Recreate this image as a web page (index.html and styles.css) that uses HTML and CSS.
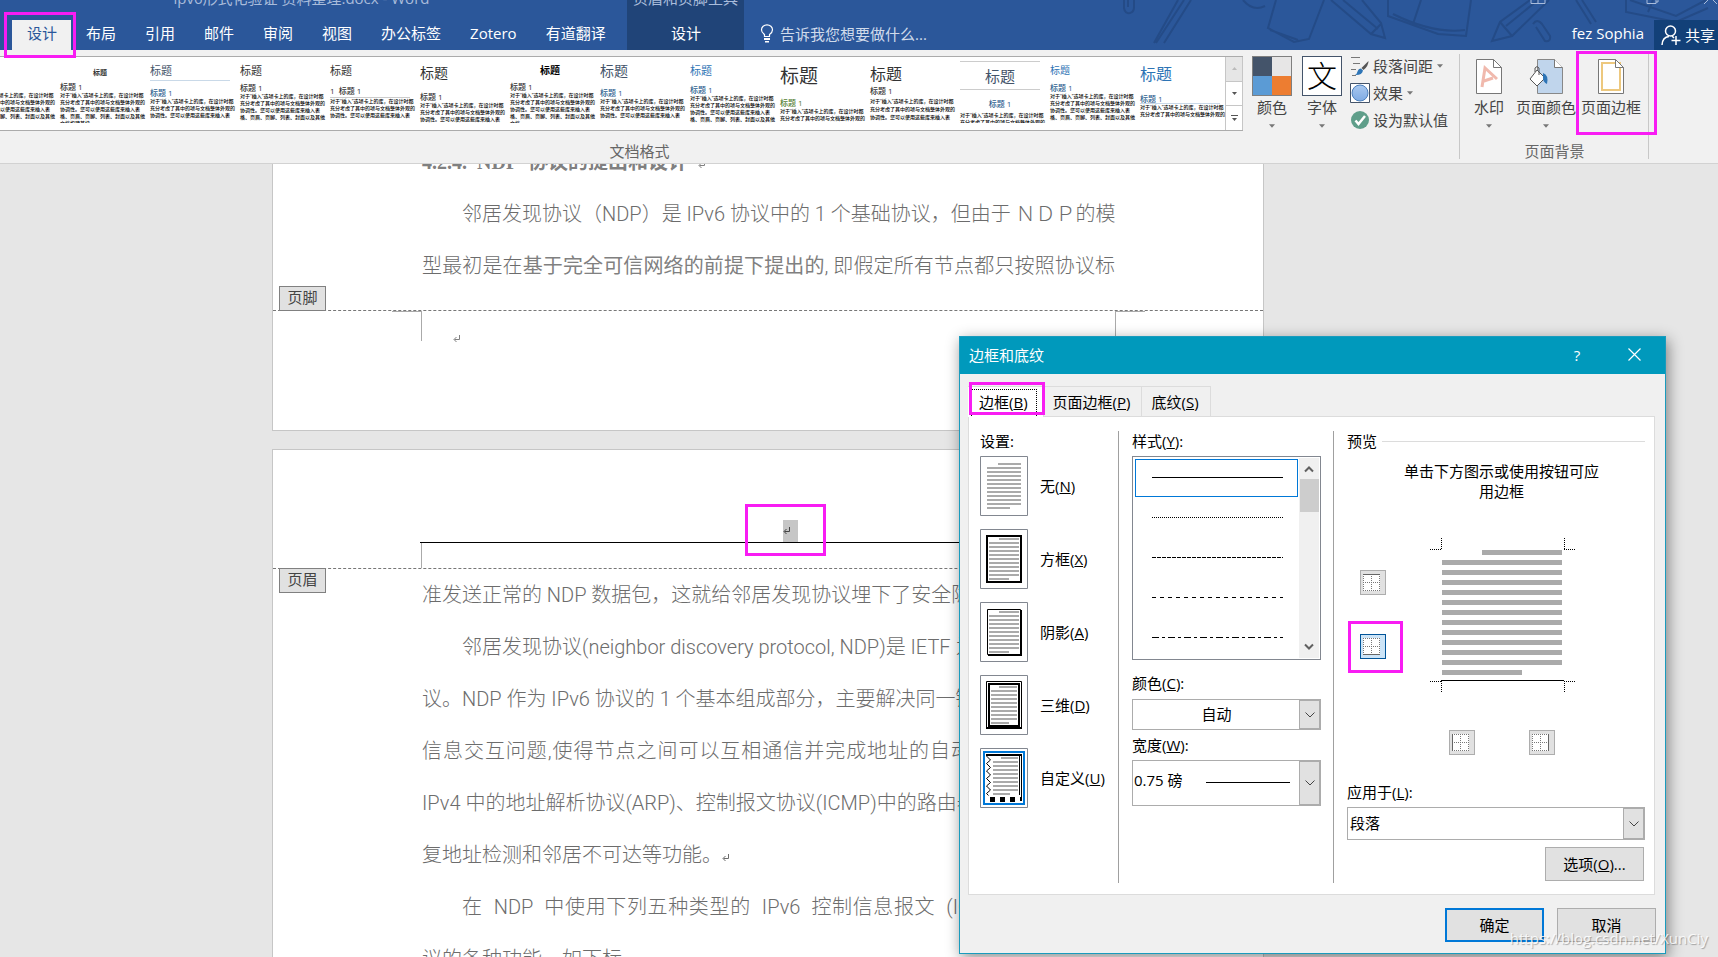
FILE: index.html
```html
<!DOCTYPE html>
<html lang="zh-CN">
<head>
<meta charset="utf-8">
<title>Word</title>
<link rel="stylesheet" href="styles.css">
</head>
<body>
<svg class="defs" width="0" height="0" aria-hidden="true">
  <defs>
    <symbol id="ret" viewBox="0 0 8 8"><path d="M6.5 0v4.5H1.5M3.5 2L1 4.5L3.5 7" fill="none" stroke="currentColor"/></symbol>
    <symbol id="caret" viewBox="0 0 7 4"><path d="M0 0h7L3.500 4z" fill="currentColor"/></symbol>
    <symbol id="chev" viewBox="0 0 10 6"><path d="M.5.5L5 5L9.500.5" fill="none" stroke="currentColor"/></symbol>
    <symbol id="lines" viewBox="0 0 34 46"><path d="M11 1h23M0 5h34M0 9h34M0 13h34M0 17h34M0 21h34M0 25h34M0 29h34M0 33h34M0 37h34M0 41h34M0 45h23" stroke="#aaa" stroke-width="2"/></symbol>
    <symbol id="grid" viewBox="0 0 17 17"><path d="M0 0h17v17H0z" fill="#fff"/><path d="M0 .5h17M0 8.500h17M0 16.500h17M.5 0v17M8.500 0v17M16.500 0v17" stroke="#777" stroke-dasharray="1 1"/></symbol>
  </defs>
</svg>

<div class="app">
  <header class="top">
    <svg class="doodle" viewBox="0 0 600 50" aria-hidden="true">
      <g fill="none" stroke="#244b87" stroke-width="2">
        <path d="M6 0v8q1 6 6 5q4-1 4-6V0M10 0v7"/>
        <path d="M66 0L38 43M73 0L46 43M60 0L36 43"/>
        <path d="M125 0q10 12 22 6M158 0l-8 28l26 14l15-3L206 0M152 30l28 10"/>
        <path d="M213 0l40 34l14 4l-4-15L244 0M225 0l35 29M253 34l10-10"/>
        <path d="M270 0l0 16l50 18l28 2l5-36M275 14q40 20 72 16M303 0l-8 24"/>
        <path d="M412 0l-30 22l-8 19l20-5L431 0M420 0l-32 26M382 22l12 14"/>
        <path d="M458 0l15 24M464 0l14 22M415 24q4-6 9 0l8 12q1 6-5 5l-9-14"/>
        <path d="M508 0v12l50 10l32-14M512 0l46 16l30-16M535 0l-5 12"/>
      </g>
    </svg>
    <div class="doc-title">ipv6形式化验证 资料整理.docx - Word</div>
    <div class="ctx-title">页眉和页脚工具</div>
    <svg class="winctl" viewBox="0 0 188 4" aria-hidden="true"><path d="M1 0v3.500h14V0M8 0v3.500M117 0v3.500h9V0M128 0v2h-2M174 4l4-4M183 0l4 4" fill="none" stroke="#a9bcdb"/></svg>
    <nav class="tabs">
      <button class="tab active">设计</button><button class="tab">布局</button><button class="tab">引用</button><button class="tab">邮件</button><button class="tab">审阅</button><button class="tab">视图</button><button class="tab">办公标签</button><button class="tab">Zotero</button><button class="tab">有道翻译</button>
    </nav>
    <button class="tab ctx">设计</button>
    <div class="tell">
      <svg width="14" height="19" viewBox="0 0 14 19"><path d="M4.500 12.500v-2Q1.500 8.500 1.500 5.800A5.500 5 0 0 1 12.500 5.800Q12.500 8.500 9.500 10.500v2z" fill="none" stroke="#fff" stroke-width="1.200"/><path d="M4 14h6v2H4zM5 17h4v1.500H5z" fill="#fff"/></svg>
      <span>告诉我您想要做什么...</span>
    </div>
    <div class="account">
      <span>fez Sophia</span>
      <button class="share"><svg width="20" height="20" viewBox="0 0 20 20"><g fill="none" stroke="#fff" stroke-width="1.500"><circle cx="9.500" cy="6" r="5"/><path d="M1 20Q1.500 12 8 11.500M11 11l2 2M15 11v9M10.500 15.500h9"/></g></svg>共享</button>
    </div>
  </header>

  <section class="ribbon">
    <div class="group formats">
      <div class="tools">
        <div class="gallery">
          <div class="thumbs">
            <div class="thumb s1"><b></b><i></i><p>对于“插入”选项卡上的库，在设计时都充分考虑了其中的项与文档整体外观的协调性。您可以使用这些库来插入表格、页眉、页脚、列表、封面以及其他</p></div>
            <div class="thumb s2"><b>标题</b><i>标题 1</i><p>对于“插入”选项卡上的库，在设计时都充分考虑了其中的项与文档整体外观的协调性。您可以使用这些库来插入表格、页眉、页脚、列表、封面以及其他文档构建基块。</p></div>
            <div class="thumb s3"><b>标题</b><i>标题 1</i><p>对于“插入”选项卡上的库，在设计时都充分考虑了其中的项与文档整体外观的协调性。您可以使用这些库来插入表</p></div>
            <div class="thumb s4"><b>标题</b><i>标题 1</i><p>对于“插入”选项卡上的库，在设计时都充分考虑了其中的项与文档整体外观的协调性。您可以使用这些库来插入表格、页眉、页脚、列表、封面以及其他</p></div>
            <div class="thumb s5"><b>标题</b><i>1&nbsp; 标题 1</i><p>对于“插入”选项卡上的库，在设计时都充分考虑了其中的项与文档整体外观的协调性。您可以使用这些库来插入表</p></div>
            <div class="thumb s6"><b>标题</b><i>标题 1</i><p>对于“插入”选项卡上的库，在设计时都充分考虑了其中的项与文档整体外观的协调性。您可以使用这些库来插入表</p></div>
            <div class="thumb s7"><b>标题</b><i>标题 1</i><p>对于“插入”选项卡上的库，在设计时都充分考虑了其中的项与文档整体外观的协调性。您可以使用这些库来插入表格、页眉、页脚、列表、封面以及其他文档</p></div>
            <div class="thumb s8"><b>标题</b><i>标题 1</i><p>对于“插入”选项卡上的库，在设计时都充分考虑了其中的项与文档整体外观的协调性。您可以使用这些库来插入表</p></div>
            <div class="thumb s9"><b>标题</b><i>标题 1</i><p>对于“插入”选项卡上的库，在设计时都充分考虑了其中的项与文档整体外观的协调性。您可以使用这些库来插入表格、页眉、页脚、列表、封面以及其他</p></div>
            <div class="thumb s10"><b>标题</b><i>标题 1</i><p>对于“插入”选项卡上的库，在设计时都充分考虑了其中的项与文档整体外观的</p></div>
            <div class="thumb s11"><b>标题</b><i>标题 1</i><p>对于“插入”选项卡上的库，在设计时都充分考虑了其中的项与文档整体外观的协调性。您可以使用这些库来插入表</p></div>
            <div class="thumb s12"><b>标题</b><i>标题 1</i><p>对于“插入”选项卡上的库，在设计时都充分考虑了其中的项与文档整体外观的</p></div>
            <div class="thumb s13"><b>标题</b><i>标题 1</i><p>对于“插入”选项卡上的库，在设计时都充分考虑了其中的项与文档整体外观的协调性。您可以使用这些库来插入表格、页眉、页脚、列表、封面以及其他</p></div>
            <div class="thumb s14"><b>标题</b><i>标题 1</i><p>对于“插入”选项卡上的库，在设计时都充分考虑了其中的项与文档整体外观的</p></div>
          </div>
          <div class="gscroll">
            <button class="off" aria-label="上一行"><svg width="5" height="3" viewBox="0 0 7 4"><path d="M0 4h7L3.500 0z" fill="#bbb"/></svg></button>
            <button aria-label="下一行"><svg width="5" height="3"><use href="#caret"/></svg></button>
            <button aria-label="更多"><svg width="7" height="7" viewBox="0 0 7 7"><path d="M0 .5h7" stroke="#555"/><path d="M1 3h5L3.500 6z" fill="#555"/></svg></button>
          </div>
        </div>
        <button class="big"><svg width="40" height="40" viewBox="0 0 40 40"><path d="M0 0h40v40H0z" fill="#7f7f7f"/><path d="M1 1h19v19H1z" fill="#44546a"/><path d="M20 1h19v19H20z" fill="#e7e6e6"/><path d="M1 20h19v19H1z" fill="#5b9bd5"/><path d="M20 20h19v19H20z" fill="#ed7d31"/></svg><span>颜色</span><svg class="car" width="6" height="4"><use href="#caret"/></svg></button>
        <button class="big"><span class="fontbox">文</span><span>字体</span><svg class="car" width="6" height="4"><use href="#caret"/></svg></button>
        <div class="stack">
          <button><svg width="20" height="20" viewBox="0 0 20 20"><path d="M1 1.500h9M3 7.500h7M1 13.500h5M2 19.500h4" stroke="#777"/><path d="M18.500 5l-7 7l2 2q5-4 5-9z" fill="#555"/><path d="M11 12.500l2 2q-1 5-8 4.500q2-1 2.500-3.500q1-3 3.500-3z" fill="#2e75b6"/></svg><span>段落间距</span><svg width="6" height="4"><use href="#caret"/></svg></button>
          <button><svg width="20" height="20" viewBox="0 0 20 20"><defs><linearGradient id="eg" x2="0" y2="1"><stop stop-color="#a9c8ef"/><stop offset="1" stop-color="#7fabe4"/></linearGradient></defs><path d="M.5.5h19v19H.5z" fill="#fff" stroke="#44546a"/><circle cx="10" cy="10" r="8" fill="url(#eg)" stroke="#4a7ebb"/></svg><span>效果</span><svg width="6" height="4"><use href="#caret"/></svg></button>
          <button><svg width="20" height="20" viewBox="0 0 20 20"><circle cx="10" cy="10" r="9" fill="#5f9e8a"/><path d="M5.500 10.500l3 3.500L15 6" fill="none" stroke="#fff" stroke-width="2.500"/></svg><span>设为默认值</span></button>
        </div>
      </div>
      <div class="glabel shift">文档格式</div>
    </div>
    <div class="group background">
      <div class="tools">
        <button class="big page"><svg width="26" height="35" viewBox="0 0 26 35"><path d="M.5.5h17l8 8v26H.5z" fill="#fff" stroke="#777"/><path d="M17.500.5v8h8" fill="none" stroke="#777"/><path d="M6 28L9 9l12 11M8 22l9-3" fill="none" stroke="#f0b9ad" stroke-width="3"/></svg><span>水印</span><svg class="car" width="6" height="4"><use href="#caret"/></svg></button>
        <button class="big page"><svg width="34" height="35" viewBox="0 0 34 35"><path d="M8.500.5h17l8 8v26h-25z" fill="#c0d5ec" stroke="#888"/><path d="M25.500.5v8h8" fill="#fff" stroke="#777"/><path d="M8 11l8 8l-8 8l-7-7z" fill="#fff" stroke="#555"/><path d="M6 13V9q2-3 4 0v7" fill="none" stroke="#555"/><path d="M14 14q6 2 4 11q-4-2-4-6z" fill="#2e75b6"/></svg><span>页面颜色</span><svg class="car" width="6" height="4"><use href="#caret"/></svg></button>
        <button class="big page"><svg width="26" height="35" viewBox="0 0 26 35"><path d="M.5.5h17l8 8v26H.5z" fill="#fff" stroke="#777"/><path d="M4 4h18v27H4z" fill="none" stroke="#edc87e" stroke-width="2"/><path d="M17.500.5v8h8z" fill="#fff" stroke="#777"/></svg><span>页面边框</span></button>
      </div>
      <div class="glabel">页面背景</div>
    </div>
  </section>

  <main class="canvas">
    <article class="sheet first">
      <div class="text">
        <h2>4.2.4.&nbsp; NDP&nbsp; 协议的提出和设计&nbsp; <svg width="8" height="8"><use href="#ret"/></svg></h2>
        <p class="in">邻居发现协议（NDP）是 IPv6 协议中的 1 个基础协议，但由于 ＮＤＰ的模</p>
        <p>型最初是在<strong>基于完全可信网络的前提下提出的</strong>, 即假定所有节点都只按照协议标</p>
      </div>
      <div class="footer">
        <span class="mark foot">页脚</span>
        <i class="corner"></i><i class="corner right"></i>
        <svg width="8" height="8"><use href="#ret"/></svg>
      </div>
    </article>
    <article class="sheet second">
      <div class="header">
        <div class="hline"><span class="sel"><svg width="8" height="8"><use href="#ret"/></svg></span></div>
        <div class="under"></div>
        <span class="mark head">页眉</span>
      </div>
      <div class="text part">
        <p>准发送正常的 NDP 数据包，这就给邻居发现协议埋下了安全隐</p>
        <p class="in">邻居发现协议(neighbor discovery protocol, NDP)是 IETF 为</p>
        <p>议。NDP 作为 IPv6 协议的 1 个基本组成部分，主要解决同一链</p>
        <p>信息交互问题,使得节点之间可以互相通信并完成地址的自动</p>
        <p>IPv4 中的地址解析协议(ARP)、控制报文协议(ICMP)中的路由器</p>
        <p class="end">复地址检测和邻居不可达等功能。<svg width="8" height="8"><use href="#ret"/></svg></p>
        <p class="in">在&nbsp; NDP&nbsp; 中使用下列五种类型的&nbsp; IPv6&nbsp; 控制信息报文&nbsp; (IC</p>
        <p class="end">议的各种功能，如下标</p>
      </div>
    </article>
  </main>

  <section class="dialog" role="dialog" aria-labelledby="dt">
    <div class="dbar"><span id="dt">边框和底纹</span>
      <button aria-label="帮助">?</button>
      <button aria-label="关闭"><svg width="13" height="13" viewBox="0 0 13 13"><path d="M.5.5l12 12M12.500.5l-12 12" stroke="#fff" stroke-width="1.200"/></svg></button>
    </div>
    <div class="dtabs">
      <button class="on"><span>边框(<u>B</u>)</span></button><button>页面边框(<u>P</u>)</button><button>底纹(<u>S</u>)</button>
    </div>
    <div class="panel">
      <div class="col settings">
        <div class="cap">设置:</div>
        <button><svg width="48" height="60" viewBox="0 0 48 60"><path d="M.5.5h47v59H.5z" fill="#fff" stroke="#828790"/><use href="#lines" x="7" y="7" width="34" height="46"/></svg><span>无(<u>N</u>)</span></button>
        <button><svg width="48" height="60" viewBox="0 0 48 60"><path d="M.5.5h47v59H.5z" fill="#fff" stroke="#828790"/><path d="M7 7h34v46H7z" fill="none" stroke="#000" stroke-width="2"/><path d="M19 10h20M9 14h30M9 18h30M9 22h30M9 26h30M9 30h30M9 34h30M9 38h30M9 42h30M9 46h30M9 50h20" stroke="#aaa" stroke-width="2"/></svg><span>方框(<u>X</u>)</span></button>
        <button><svg width="48" height="60" viewBox="0 0 48 60"><path d="M.5.5h47v59H.5z" fill="#fff" stroke="#828790"/><path d="M7.500 7.500h33v45h-33z" fill="none" stroke="#000"/><path d="M41 8v45H8" fill="none" stroke="#000" stroke-width="2"/><path d="M19 10h20M9 14h30M9 18h30M9 22h30M9 26h30M9 30h30M9 34h30M9 38h30M9 42h30M9 46h30M9 50h20" stroke="#aaa" stroke-width="2"/></svg><span>阴影(<u>A</u>)</span></button>
        <button><svg width="48" height="60" viewBox="0 0 48 60"><path d="M.5.5h47v59H.5z" fill="#fff" stroke="#828790"/><path d="M6.500 6.500h35v47h-35z" fill="none" stroke="#000"/><path d="M9 9h30v42H9z" fill="none" stroke="#000" stroke-width="2"/><path d="M6 53h36" stroke="#000" stroke-width="2"/><path d="M19 12h18M11 16h26M11 20h26M11 24h26M11 28h26M11 32h26M11 36h26M11 40h26M11 44h26M11 48h18" stroke="#aaa" stroke-width="2"/></svg><span>三维(<u>D</u>)</span></button>
        <button><svg width="48" height="60" viewBox="0 0 48 60"><path d="M.5.5h47v59H.5z" fill="#fff" stroke="#828790"/><path d="M4 4h40v52H4z" fill="none" stroke="#0078d7" stroke-width="2"/><path d="M6 7h36" stroke="#000" stroke-width="2"/><path d="M6.500 8l4 4l-4 3.500l4 4l-4 3.500l4 4l-4 3.500l4 4l-4 3.500l4 4l-4 3.500l2 2M39.500 8v39M41.500 8v45" fill="none" stroke="#000"/><path d="M10 49h5v5h-5zM20 49h5v5h-5zM30 49h5v5h-5zM40 49h2v4h-2z"/><path d="M21 10h17M13 14h25M13 18h25M13 22h25M13 26h25M13 30h25M13 34h25M13 38h25M13 42h25M13 46h17" stroke="#aaa" stroke-width="2"/></svg><span>自定义(<u>U</u>)</span></button>
      </div>
      <div class="col style">
        <div class="cap">样式(<u>Y</u>):</div>
        <div class="list">
          <ul role="listbox" aria-label="样式">
            <li role="option" aria-selected="true"><svg height="1"><path d="M0 .5h132" stroke="#000"/></svg></li>
            <li role="option"><svg height="1"><path d="M0 .5h132" stroke="#000" stroke-dasharray="1 1"/></svg></li>
            <li role="option"><svg height="1"><path d="M0 .5h132" stroke="#000" stroke-dasharray="4 1"/></svg></li>
            <li role="option"><svg height="1"><path d="M0 .5h132" stroke="#000" stroke-dasharray="4 4"/></svg></li>
            <li role="option"><svg height="1"><path d="M0 .5h132" stroke="#000" stroke-dasharray="7 3 3 3"/></svg></li>
          </ul>
          <div class="bar">
            <svg width="10" height="8" viewBox="0 0 10 8"><path d="M1 6.500L5 2.500L9 6.500" fill="none" stroke="#606060" stroke-width="2"/></svg>
            <i></i>
            <svg width="10" height="8" viewBox="0 0 10 8"><path d="M1 1.500L5 5.500L9 1.500" fill="none" stroke="#606060" stroke-width="2"/></svg>
          </div>
        </div>
        <label class="cap color" for="color">颜色(<u>C</u>):</label>
        <div class="combo"><select id="color" class="mid"><option>自动</option></select><span><svg width="10" height="6"><use href="#chev"/></svg></span></div>
        <label class="cap" for="width">宽度(<u>W</u>):</label>
        <div class="combo tall"><select id="width"><option>0.75 磅</option></select><em></em><span><svg width="10" height="6"><use href="#chev"/></svg></span></div>
      </div>
      <div class="col preview">
        <div class="cap legend">预览</div>
        <p class="hint">单击下方图示或使用按钮可应<br>用边框</p>
        <div class="diagram">
          <div class="side">
            <button aria-label="上框线"><svg width="17" height="17" viewBox="0 0 17 17"><use href="#grid"/><path d="M0 .5h17" stroke="#666"/></svg></button>
            <button class="picked" aria-label="下框线"><svg width="17" height="17" viewBox="0 0 17 17"><use href="#grid"/><path d="M0 16.500h17" stroke="#666"/></svg></button>
          </div>
          <svg width="146" height="156" viewBox="0 0 146 156"><path d="M0 11.500h12M11.500 0v12M134.500 0v12M134 11.500h12M0 143.500h12M11.500 143v12M134.500 143v12M134 143.500h12" fill="none" stroke="#000" stroke-dasharray="1 1"/><path d="M52 14.500h80M12 24.500h120M12 34.500h120M12 44.500h120M12 54.500h120M12 64.500h120M12 74.500h120M12 84.500h120M12 94.500h120M12 104.500h120M12 114.500h120M12 124.500h120M12 134.500h80" stroke="#aaa" stroke-width="5"/><path d="M11 142.500h123" stroke="#000"/></svg>
        </div>
        <div class="bottom">
          <button aria-label="左框线"><svg width="17" height="17" viewBox="0 0 17 17"><use href="#grid"/><path d="M.5 0v17" stroke="#666"/></svg></button>
          <button aria-label="右框线"><svg width="17" height="17" viewBox="0 0 17 17"><use href="#grid"/><path d="M16.500 0v17" stroke="#666"/></svg></button>
        </div>
        <label class="cap" for="apply">应用于(<u>L</u>):</label>
        <div class="combo apply"><select id="apply"><option>段落</option></select><span><svg width="10" height="6"><use href="#chev"/></svg></span></div>
        <button class="btn opts">选项(<u>O</u>)...</button>
      </div>
    </div>
    <div class="actions"><button class="btn ok">确定</button><button class="btn">取消</button></div>
    <i class="ring r-tab"></i><i class="ring r-side"></i>
  </section>

  <i class="ring r-design"></i><i class="ring r-border"></i><i class="ring r-head"></i>
  <div class="credit">https://blog.csdn.net/XunCiy</div>
</div>
</body>
</html>
```
FILE: styles.css
```css
* { box-sizing: border-box; }
body {
  margin: 0;
  font: 15px/20px "Open Sans", "Noto Sans CJK SC", sans-serif;
  color: #000;
}
button, select {
  font: inherit;
  color: inherit;
  margin: 0;
  padding: 0;
  border: 0;
  background: none;
  border-radius: 0;
}
svg { display: block; flex: none; }
.defs { position: absolute; }
.app {
  position: relative;
  height: 100vh;
  display: flex;
  flex-direction: column;
  overflow: hidden;
}

/* title bar and tabs */
.top {
  position: relative;
  display: grid;
  grid-template: 12px 38px / 627px 117px 1fr auto;
  background: #2b579a;
  color: #fff;
  flex: none;
}
.top > * { position: relative; }
.top .doodle { position: absolute; right: 0; top: 0; width: 600px; height: 50px; }
.doc-title, .ctx-title {
  display: flex;
  align-items: flex-end;
  justify-content: center;
  height: 12px;
  padding-bottom: 4px;
  overflow: hidden;
  white-space: nowrap;
  color: #a9bcdb;
}
.doc-title { padding-right: 24px; }
.ctx-title { background: #204478; }
.winctl { grid-column: 3 / 5; width: 188px; height: 4px; justify-self: end; }
.tabs { grid-column: 1; display: flex; padding: 8px 0 0 12px; }
.tab { padding: 0 14px 5px 15px; white-space: nowrap; }
.tab.active { background: #f1f1f1; color: #2b579a; }
.tab.ctx { background: #204478; padding-top: 8px; }
.tell { display: flex; align-items: center; gap: 6px; padding: 8px 0 3px 16px; color: #d0dbeb; }
.account { display: flex; align-items: flex-end; gap: 10px; }
.account > span { padding-bottom: 7px; }
.share {
  display: flex;
  align-items: center;
  gap: 4px;
  height: 30px;
  padding: 0 3px 0 7px;
  background: #124078;
}

/* ribbon */
.ribbon {
  display: flex;
  flex: none;
  height: 114px;
  padding-right: 69px;
  background: #f1f1f1;
  border-bottom: 1px solid #d2d2d2;
  color: #444;
}
.group {
  position: relative;
  display: flex;
  flex-direction: column;
  justify-content: space-between;
}
.group::after {
  content: "";
  position: absolute;
  right: 0;
  top: 4px;
  bottom: 4px;
  width: 1px;
  background: #c8c8c8;
}
.formats { flex: 1; min-width: 0; }
.tools { display: flex; height: 85px; padding-top: 6px; }
.glabel { text-align: center; color: #666; line-height: 20px; padding-bottom: 2px; }
.glabel.shift { padding-right: 181px; }
.gallery {
  display: flex;
  flex: 1;
  min-width: 0;
  height: 75px;
  background: #fff;
  border-top: 1px solid #ababab;
  border-bottom: 1px solid #ababab;
  margin-right: 4px;
}
.thumbs {
  display: flex;
  flex: 1;
  gap: 10px;
  height: 66px;
  min-width: 0;
  padding-top: 4px;
  overflow: hidden;
}
.thumb { flex: none; width: 80px; display: grid; grid-template-rows: 27px 10px auto; align-content: start; color: #333; }
.thumb:first-child { margin-left: -30px; }
.thumb b { font-weight: 400; font-size: 11px; line-height: 20px; height: 20px; }
.thumb i { font-style: normal; font-size: 8px; line-height: 10px; font-weight: 500; }
.thumb p { margin: 0 -6px 0 0; font-size: 5px; line-height: 7px; color: #000; font-weight: 500; }
.s1 { grid-template-rows: 21px 10px auto; }
.s2 { grid-template-rows: 21px 10px auto; }
.s2 b { font-weight: 700; font-size: 7px; line-height: 24px; text-align: center; }
.s3 b { color: #44546a; border-bottom: 1px solid #c9d9e8; }
.s3 i, .s8 i, .s9 i, .s13 i, .s14 i { color: #2e5f8f; }
.s4 { grid-template-rows: 22px 10px auto; }
.s5 { grid-template-rows: 25px 12px auto; }
.s5 i { border-bottom: 1px solid #ccc; height: 12px; }
.s6 { grid-template-rows: 31px 10px auto; }
.s6 b { font-size: 14px; line-height: 24px; }
.s7 { grid-template-rows: 21px 10px auto; }
.s7 b { font-weight: 700; font-size: 10px; line-height: 18px; text-align: center; color: #000; }
.s8 b { font-size: 14px; color: #44546a; }
.s9 { grid-template-rows: 24px 10px auto; }
.s9 b, .s13 b, .s14 b { color: #2e74b5; }
.s10 { grid-template-rows: 37px 10px auto; }
.s10 b { font-size: 19px; line-height: 30px; }
.s10 i { color: #538135; }
.s11 { grid-template-rows: 25px 10px auto; }
.s11 b { font-size: 16px; line-height: 26px; }
.s11 p { line-height: 8px; padding-top: 1px; }
.s12 { grid-template-rows: 38px 10px auto; }
.s12 b { font-size: 15px; line-height: 28px; height: 29px; text-align: center; color: #44546a; border-top: 1px solid #ccc; border-bottom: 1px solid #ccc; }
.s12 i { text-align: center; color: #2e5f8f; }
.s12 p { padding-top: 3px; }
.s13 { grid-template-rows: 22px 10px auto; }
.s13 b { font-size: 10px; line-height: 18px; }
.s14 { grid-template-rows: 33px 10px auto; }
.s14 b { font-size: 16px; line-height: 26px; }
.s14 i { border-bottom: 1px solid #c9d9e8; }
.gscroll { width: 18px; display: flex; flex-direction: column; border: solid #c6c6c6; border-width: 0 1px; }
.gscroll button { flex: 1; display: grid; place-items: center; color: #555; }
.gscroll button + button { border-top: 1px solid #c6c6c6; }
.gscroll .off { background: #e6e6e6; }
.big { display: flex; flex-direction: column; align-items: center; width: 50px; }
.big > span:not(.fontbox) { padding-top: 1px; white-space: nowrap; }
.car { color: #777; margin-top: 7px; }
.fontbox {
  display: grid;
  place-items: center;
  width: 40px;
  height: 40px;
  border: 1px solid #44546a;
  background: #fff;
  color: #000;
  font-size: 30px;
  font-weight: 300;
}
.stack { display: flex; flex-direction: column; gap: 7px; width: 113px; padding-left: 3px; }
.stack button { display: flex; align-items: center; gap: 3px; color: #444; white-space: nowrap; }
.stack button > svg + span + svg { color: #777; margin-left: 1px; }
.background { width: 189px; }
.background .tools { padding: 9px 0 0 14px; gap: 5px; }
.page { width: auto; }
.page:first-child { margin-right: 7px; }
.page > span:not(.fontbox) { padding-top: 3px; }

/* document */
.canvas { flex: 1; min-height: 0; overflow: hidden; background: #e6e6e6; padding-left: 272px; }
.sheet {
  width: 992px;
  background: #fff;
  border: 1px solid #c6c6c6;
  color: #808080;
  overflow: hidden;
}
.sheet.first { border-top: 0; }
.sheet.second { margin-top: 18px; }
.text { width: 693px; margin-left: 149px; font: 300 20px/52px Roboto, "Noto Sans CJK SC", sans-serif; color: #6c6c6c; }
.text.part { width: 549px; }
.text p, .text h2 { margin: 0; white-space: nowrap; text-align: justify; text-align-last: justify; }
.text .in { padding-left: 40px; }
.text .end, .text h2 { text-align-last: left; }
.text strong, .text h2 { color: #808080; }
.text h2 { margin-top: -28px; font: 700 20px/52px "Liberation Serif", "Noto Sans CJK SC", serif; }
.text svg { display: inline-block; }
.footer { position: relative; height: 120px; margin-top: 18px; border-top: 1px dashed #777; padding: 24px 0 0 180px; }
.header { position: relative; height: 119px; border-bottom: 1px dashed #777; padding: 70px 148px 0 147px; }
.hline { display: flex; justify-content: center; height: 23px; border-bottom: 1px solid #000; padding-left: 46px; }
.sel { display: flex; align-items: center; width: 15px; height: 22px; background: #c6c6c6; color: #444; }
.under { height: 25px; margin-left: 1px; border-left: 1px solid #aaa; }
.corner { position: absolute; top: 0; left: 119px; width: 30px; height: 30px; border: solid #aaa; border-width: 1px 1px 0 0; }
.corner.right { left: 842px; border-width: 1px 0 0 1px; }
.mark {
  position: absolute;
  left: 6px;
  width: 47px;
  height: 25px;
  border: 1px solid #808080;
  background: #e1e1e1;
  color: #444;
  text-align: center;
  line-height: 21px;
}
.mark.foot { top: -25px; }
.mark.head { top: 118px; }

/* dialog */
.dialog {
  position: absolute;
  top: 336px;
  right: 52px;
  width: 707px;
  border: 1px solid #1a9bbd;
  background: #f0f0f0;
  box-shadow: 2px 4px 14px rgba(0, 0, 0, .45);
  z-index: 2;
}
.dbar { display: flex; align-items: center; height: 37px; padding: 0 8px 2px 9px; background: #0099bc; color: #fff; }
.dbar span { flex: 1; }
.dbar button { width: 46px; height: 35px; display: grid; place-items: center; margin-left: 11px; }
.dtabs { display: flex; height: 42px; padding: 12px 0 0 8px; }
.dtabs button { border: 1px solid #dcdcdc; border-left: 0; border-bottom: 0; padding: 0 10px; height: 30px; }
.dtabs .on { background: #fff; padding: 0 6px 0 3px; height: 31px; position: relative; }
.dtabs .on span { display: block; padding: 2px 8px 4px 7px; border: 1px dotted #000; border-bottom: 0; }
.dtabs button + button { padding: 0 11px 0 9px; }
.panel {
  display: grid;
  grid-template-columns: 149px 215px 1fr;
  margin: 0 10px 0 8px;
  height: 479px;
  padding: 14px 0 11px;
  background: #fff;
  border: 1px solid #dcdcdc;
}
.col { display: flex; flex-direction: column; padding: 0 12px 0 11px; }
.col + .col { border-left: 1px solid #a0a0a0; padding-left: 13px; }
.cap { display: block; line-height: 20px; }
.settings .cap { margin-bottom: 5px; }
.settings button { display: flex; align-items: center; gap: 12px; height: 60px; margin-bottom: 13px; white-space: nowrap; }
.settings, .style { height: 452px; }
.list { display: flex; height: 204px; margin-top: 5px; border: 1px solid #828790; padding: 1px; }
.list ul { flex: 1; margin: 1px 1px 0; padding: 0; list-style: none; }
.list li { height: 38px; margin-bottom: 2px; padding: 18px 15px 0 17px; }
.list li[aria-selected] { border: 1px solid #0078d7; padding: 17px 14px 0 16px; }
.list li svg { width: 100%; }
.bar { width: 20px; display: flex; flex-direction: column; align-items: center; background: #f0f0f0; padding: 7px 0; }
.bar i { width: 19px; height: 33px; margin-top: 6px; margin-bottom: auto; background: #cdcdcd; }
.color { margin-top: 13px; }
.combo { position: relative; display: flex; height: 31px; margin: 6px 0 5px; border: 1px solid #acacac; background: #fff; }
.combo select { flex: 1; min-width: 0; appearance: none; padding: 0 24px 2px 2px; outline: 0; }
.combo select.mid { text-align-last: center; padding-right: 22px; }
.combo span { position: absolute; right: 0; top: 0; bottom: 0; width: 21px; display: grid; place-items: center; border: 1px solid #acacac; background: #e1e1e1; color: #444; pointer-events: none; }
.combo.tall { height: 46px; margin-top: 5px; }
.combo.tall select { padding-bottom: 6px; padding-left: 1px; }
.combo em { position: absolute; right: 30px; top: 21px; width: 84px; height: 1px; background: #000; }
.legend { display: flex; align-items: center; gap: 5px; }
.legend::after { content: ""; flex: 1; height: 1px; background: #dcdcdc; }
.hint { margin: 10px 0 0 11px; text-align: center; }
.col.preview { padding-right: 9px; }
.diagram { display: flex; align-items: flex-start; gap: 44px; margin-top: 37px; padding-left: 13px; }
.side { display: grid; gap: 39px; padding-top: 32px; }
.side button, .bottom button { width: 26px; height: 25px; border: 1px solid #adadad; background: #e1e1e1; padding: 2px; }
.side .picked { border-color: #005499; background: #cce4f7; }
.bottom { display: flex; gap: 54px; margin: 36px 0 27px; padding-left: 102px; }
.combo.apply { height: 33px; margin: 5px 0 7px; }
.btn { width: 99px; height: 34px; border: 1px solid #adadad; background: #e1e1e1; }
.opts { align-self: flex-end; margin-right: 1px; }
.ok { border: 2px solid #0078d7; }
.actions { display: flex; justify-content: flex-end; gap: 13px; padding: 13px 9px 11px; }

/* highlight frames */
.ring { position: absolute; border: 3px solid #f81cf3; pointer-events: none; }
.r-design { left: 4px; top: 12px; width: 72px; height: 46px; }
.r-border { left: 1576px; top: 51px; width: 81px; height: 84px; }
.r-head { left: 745px; top: 504px; width: 81px; height: 52px; }
.r-tab { left: 9px; top: 45px; width: 76px; height: 33px; }
.r-side { left: 388px; top: 284px; width: 55px; height: 52px; }
.credit {
  position: absolute;
  right: 10px;
  bottom: 9px;
  z-index: 3;
  font-size: 15px;
  color: rgba(255, 255, 255, .85);
  text-shadow: 1px 1px 1px rgba(0, 0, 0, .3);
}
```
